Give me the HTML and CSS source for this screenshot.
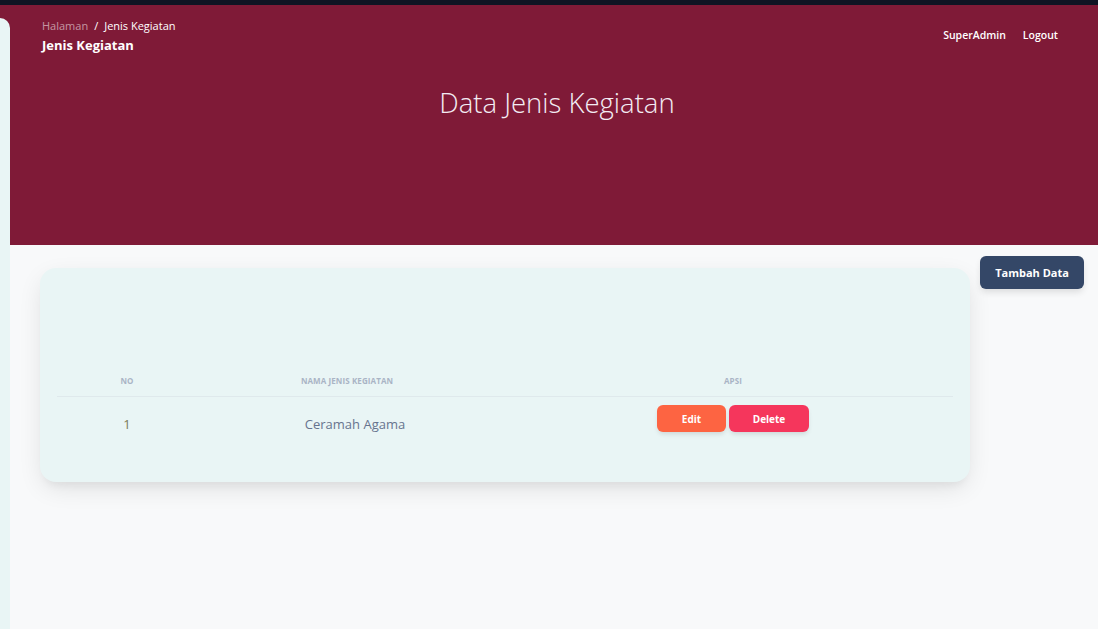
FILE: index.html
```html
<!DOCTYPE html>
<html lang="id">
<head>
<meta charset="utf-8">
<title>Data Jenis Kegiatan</title>
<link rel="stylesheet" href="styles.css">
</head>
<body>
<div class="topbar"></div>
<aside class="sidebar"></aside>
<header class="hero">
  <div class="hero-top">
    <div class="crumbs">
      <div class="crumb-line"><span class="crumb-muted">Halaman</span><span class="crumb-sep">/</span><span>Jenis Kegiatan</span></div>
      <div class="crumb-title">Jenis Kegiatan</div>
    </div>
    <nav class="user-nav">
      <a class="nav-link">SuperAdmin</a>
      <a class="nav-link">Logout</a>
    </nav>
  </div>
  <h1 class="hero-title">Data Jenis Kegiatan</h1>
</header>
<main class="content">
  <section class="card">
    <div class="table">
      <div class="row head">
        <div class="cell c1">No</div>
        <div class="cell c2">Nama Jenis Kegiatan</div>
        <div class="cell c3">Apsi</div>
      </div>
      <div class="row body">
        <div class="cell c1 num">1</div>
        <div class="cell c2 name">Ceramah Agama</div>
        <div class="cell c3 actions">
          <button class="btn btn-edit">Edit</button>
          <button class="btn btn-delete">Delete</button>
        </div>
      </div>
    </div>
  </section>
  <div class="side-actions">
    <button class="btn-add">Tambah Data</button>
  </div>
</main>
</body>
</html>
```
FILE: styles.css
```css
* { box-sizing: border-box; }
html, body { margin: 0; padding: 0; }
body {
  font-family: "Open Sans", "Liberation Sans", sans-serif;
  background: #f8f9fa;
  width: 1098px;
  height: 629px;
  overflow: hidden;
}
.topbar {
  height: 5px;
  background: #0f1423;
}
.sidebar {
  position: fixed;
  left: 0;
  top: 18px;
  bottom: 0;
  width: 10px;
  background: #e9f5f5;
  border-top-right-radius: 10px;
  z-index: 5;
}
.hero {
  height: 240px;
  background: #7f1a37;
  color: #fff;
  padding: 13px 40px 0 42px;
}
.hero-top {
  display: flex;
  justify-content: space-between;
  align-items: flex-start;
}
.crumb-line {
  font-size: 11px;
  line-height: 16px;
  display: flex;
  gap: 6px;
}
.crumb-muted { color: rgba(255,255,255,0.55); }
.crumb-title {
  font-size: 13px;
  font-weight: 700;
  line-height: 18px;
  margin-top: 2px;
}
.user-nav {
  display: flex;
  gap: 17px;
  margin-top: 9px;
}
.nav-link {
  font-size: 10.5px;
  font-weight: 600;
  color: #fff;
  line-height: 16px;
}
.hero-title {
  margin: 30px 0 0;
  padding-left: 14px;
  text-align: center;
  font-weight: 300;
  font-size: 27.5px;
  line-height: 38px;
  color: #f3ecf3;
}
.content {
  display: flex;
  align-items: flex-start;
  padding: 11px 14px 0 40px;
  gap: 10px;
}
.card {
  width: 930px;
  height: 214px;
  margin-top: 12px;
  background: #e9f5f5;
  border-radius: 16px;
  box-shadow: 0 8px 26px -4px rgba(20,20,20,0.12), 0 8px 9px -5px rgba(20,20,20,0.05);
  padding: 101px 17px 0 17px;
}
.row {
  display: grid;
  grid-template-columns: 140px 300px 1fr;
  align-items: center;
}
.row.head {
  height: 28px;
  padding-bottom: 4px;
  border-bottom: 1px solid #dfe9ec;
}
.head .cell {
  font-size: 8px;
  font-weight: 700;
  text-transform: uppercase;
  color: #a9b4c5;
  text-align: center;
  letter-spacing: 0.1px;
}
.c3 { padding-left: 16px; }
.row.body { height: 53px; align-items: start; padding-top: 8px; }
.num {
  text-align: center;
  font-size: 13px;
  color: #7b7a58;
  padding-top: 10px;
}
.name {
  text-align: center;
  font-size: 13px;
  color: #67748e;
  padding-left: 16px;
  padding-top: 10px;
}
.actions {
  display: flex;
  justify-content: center;
  gap: 3px;
}
.btn {
  border: 0;
  height: 27px;
  border-radius: 6px;
  color: #fff;
  font-family: "Open Sans", "Liberation Sans", sans-serif;
  font-weight: 700;
  font-size: 10px;
  box-shadow: 0 3px 5px -1px rgba(0,0,0,0.12);
  padding: 0;
}
.btn-edit { width: 69px; background: #fd6442; }
.btn-delete { width: 80px; background: #f5365c; }
.side-actions { display: flex; }
.btn-add {
  width: 104px;
  height: 33px;
  border: 0;
  border-radius: 6px;
  background: #344767;
  color: #fff;
  font-family: "Open Sans", "Liberation Sans", sans-serif;
  font-weight: 700;
  font-size: 11px;
  box-shadow: 0 4px 7px -1px rgba(0,0,0,0.12);
}
```
